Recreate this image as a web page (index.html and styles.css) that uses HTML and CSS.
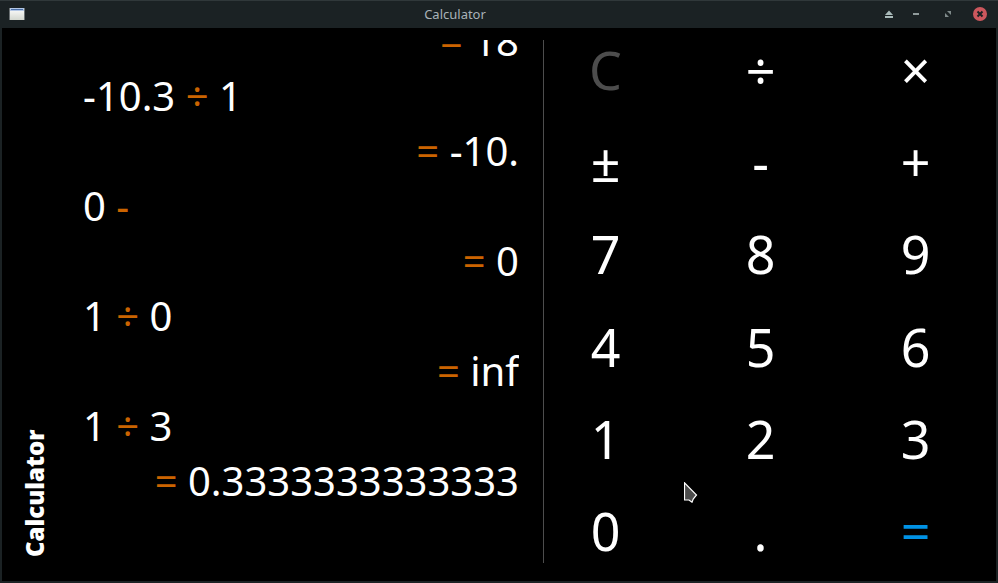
FILE: index.html
```html
<!DOCTYPE html>
<html lang="en">
<head>
<meta charset="utf-8">
<title>Calculator</title>
<link rel="stylesheet" href="styles.css">
</head>
<body>
<div class="window">
  <header class="titlebar">
    <svg class="app-icon" width="16" height="14" viewBox="0 0 16 14" aria-hidden="true">
      <defs><linearGradient id="pane" x1="0" y1="0" x2="0" y2="1"><stop offset="0" stop-color="#ffffff"/><stop offset="1" stop-color="#d3d7cf"/></linearGradient></defs>
      <rect x="0" y="1" width="16" height="12" fill="#6b7173"/>
      <rect x="1" y="1" width="14" height="12" fill="url(#pane)"/>
      <rect x="1" y="1" width="14" height="3" fill="#b4c8e6"/>
      <rect x="2" y="2" width="12" height="1" fill="#4a6fa8"/>
    </svg>
    <span class="title">Calculator</span>
    <div class="controls">
      <button class="control control-above" aria-label="Keep above"><svg width="10" height="8" viewBox="0 0 10 8"><path d="M5 0.5 9 5H1zM1 6h8v2H1z" fill="#a9bab9"/></svg></button>
      <button class="control" aria-label="Minimize"><svg width="10" height="8" viewBox="0 0 10 8"><path d="M2 3h6v2H2z" fill="#909b9b"/></svg></button>
      <button class="control" aria-label="Restore"><svg width="10" height="8" viewBox="0 0 10 8"><path d="M4 1h4v4zM2 3v4h4z" fill="#7f8a8a"/></svg></button>
      <button class="control" aria-label="Close"><svg width="14" height="14" viewBox="0 0 14 14"><circle cx="7" cy="7" r="7" fill="#cc575d"/><path d="M4.5 4.5l5 5M9.5 4.5l-5 5" stroke="#1b2224" stroke-width="2"/></svg></button>
    </div>
  </header>
  <main class="content">
    <h1 class="heading">Calculator</h1>
    <section class="history" aria-label="History">
      <p class="result"><span class="op">=</span> 18</p>
      <p class="entry">-10.3 <span class="op">÷</span> 1</p>
      <p class="result"><span class="op">=</span> -10.</p>
      <p class="entry">0 <span class="op">-</span></p>
      <p class="result"><span class="op">=</span> 0</p>
      <p class="entry">1 <span class="op">÷</span> 0</p>
      <p class="result"><span class="op">=</span> inf</p>
      <p class="entry">1 <span class="op">÷</span> 3</p>
      <p class="result"><span class="op">=</span> 0.3333333333333</p>
      <p class="entry"></p>
    </section>
    <section class="keypad" aria-label="Keypad">
      <button class="key key-clear">C</button><button class="key">÷</button><button class="key">×</button>
      <button class="key">±</button><button class="key">-</button><button class="key">+</button>
      <button class="key">7</button><button class="key">8</button><button class="key">9</button>
      <button class="key">4</button><button class="key">5</button><button class="key">6</button>
      <button class="key">1</button><button class="key">2</button><button class="key">3</button>
      <button class="key">0</button><button class="key">.</button><button class="key key-equals">=</button>
    </section>
  </main>
  <svg class="pointer" width="14" height="21" viewBox="0 0 14 21" aria-hidden="true"><path d="M0.5 0.8v17.2h4.5l3 2.2 1.2-3.2 3.3-4z" fill="#4d4d4d" stroke="#fff" stroke-width="1.2"/></svg>
</div>
</body>
</html>
```

FILE: styles.css
```css
* {
  box-sizing: border-box;
}

body {
  margin: 0;
  background: #1b2224;
  font-family: "Noto Sans", sans-serif;
  color: #fff;
}

button {
  margin: 0;
  padding: 0;
  border: 0;
  background: none;
  color: inherit;
  font: inherit;
}

.window {
  position: relative;
  display: flex;
  flex-direction: column;
  height: 100vh;
  padding: 0 2px 2px;
}

.titlebar {
  display: grid;
  grid-template-columns: 1fr auto 1fr;
  align-items: center;
  height: 28px;
  margin: 0 -2px;
  padding: 0 11px 0 9px;
  box-shadow: inset 0 1px #30383a;
  flex: none;
}

.title {
  padding-right: 86px;
  color: #a9b2b8;
  font-size: 13px;
  line-height: 18px;
}

.app-icon {
  display: block;
}

.controls {
  display: flex;
  justify-content: flex-end;
  gap: 18px;
}

.control {
  display: grid;
  place-items: center;
  width: 14px;
  height: 14px;
}

.control-above {
  margin-right: -5px;
}

.content {
  display: grid;
  grid-template-columns: 81px 436px 1fr;
  flex: 1;
  min-height: 0;
  background: #000;
}

.heading {
  margin: 0;
  padding: 24px 17px 0 0;
  justify-self: start;
  writing-mode: vertical-rl;
  transform: rotate(180deg);
  font-family: "Open Sans", "Noto Sans", sans-serif;
  font-size: 24px;
  line-height: 32px;
  font-weight: 800;
}

.history {
  display: flex;
  flex-direction: column;
  justify-content: flex-end;
  margin: 12px 0 18px;
  overflow: hidden;
  font-size: 40px;
  line-height: 55px;
}

.history p {
  flex: none;
  min-height: 55px;
  margin: 0;
}

.result {
  text-align: right;
}

.op {
  color: #cb6400;
}

.keypad {
  position: relative;
  display: grid;
  grid-template-columns: repeat(3, 1fr);
  grid-template-rows: repeat(6, 1fr);
  padding: 0 3px 0 9px;
}

.keypad::before {
  content: "";
  position: absolute;
  top: 12px;
  bottom: 18px;
  left: 24px;
  border-left: 1px solid #4d4d4d;
}

.key {
  min-width: 0;
  padding-bottom: 8px;
  font-size: 52px;
  line-height: 72px;
}

.key-clear {
  color: #4d4d4d;
}

.key-equals {
  color: #0092e5;
}

.pointer {
  position: absolute;
  left: 684px;
  top: 482px;
}
```
